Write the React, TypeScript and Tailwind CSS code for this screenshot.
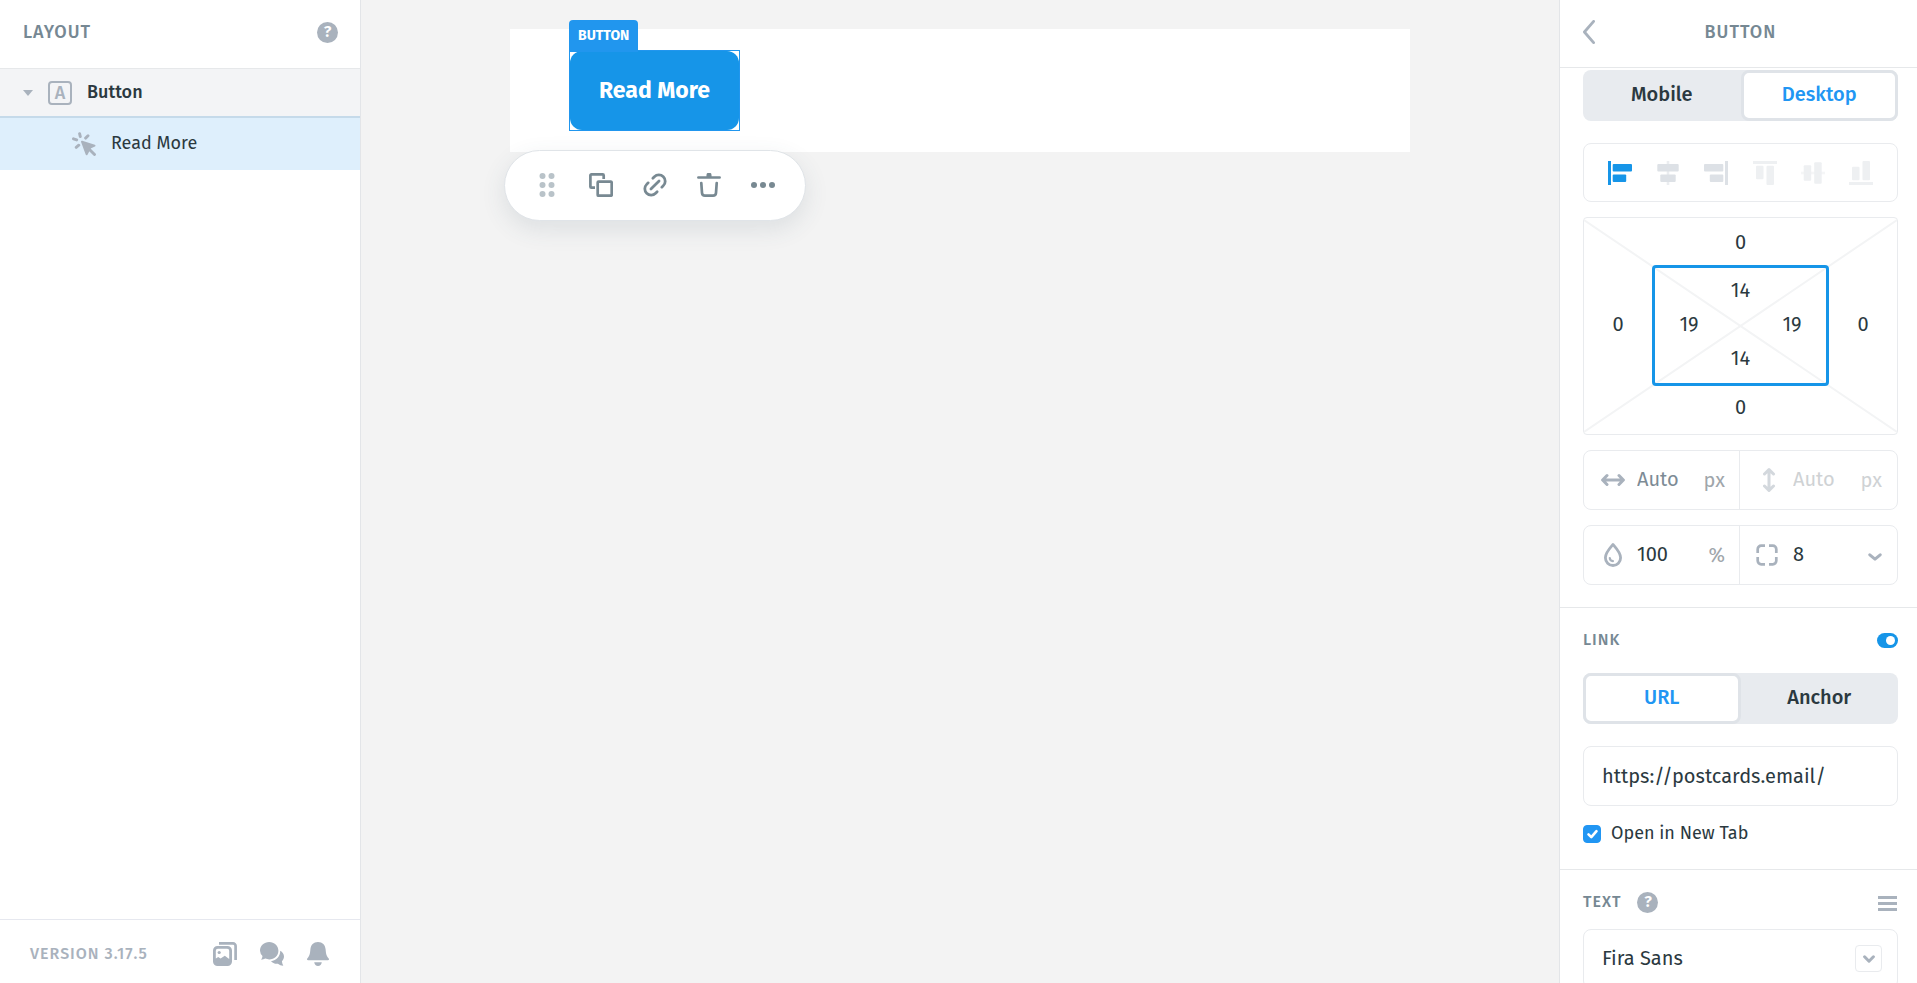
import { useState } from "react";
import type { ReactNode } from "react";

const fieldBox = "rounded-lg border border-[#e9ebee] bg-white";
const sectionTitle = "text-base font-medium tracking-[1px] text-[#768893]";
const panelTitle = "text-lg font-medium tracking-[1px] text-[#768893]";

function HelpButton() {
  return (
    <button
      type="button"
      aria-label="Help"
      className="flex size-[21px] items-center justify-center rounded-full bg-[#a9b2bd] text-base font-semibold text-white"
    >
      ?
    </button>
  );
}

function Segmented({ options, initial }: { options: string[]; initial: string }) {
  const [active, setActive] = useState(initial);

  return (
    <div className="grid h-[51px] grid-cols-2 rounded-lg bg-[#e8ebef]">
      {options.map((option) => (
        <button
          key={option}
          type="button"
          onClick={() => setActive(option)}
          className={
            option === active
              ? "rounded-lg border-3 border-[#dfe3e8] bg-white pb-1 text-xl font-medium text-[#2196f3]"
              : "pb-1 text-xl font-medium text-[#2b3940]"
          }
        >
          {option}
        </button>
      ))}
    </div>
  );
}

function Icon({
  children,
  className = "size-6",
  viewBox = "0 0 24 24",
  width = 2.7,
}: {
  children: ReactNode;
  className?: string;
  viewBox?: string;
  width?: number;
}) {
  return (
    <svg
      viewBox={viewBox}
      className={`${className} shrink-0`}
      fill="none"
      stroke="currentColor"
      strokeWidth={width}
      strokeLinecap="round"
      strokeLinejoin="round"
      aria-hidden="true"
    >
      {children}
    </svg>
  );
}

// Each icon is a guide line plus two blocks: [x, y, width, height]
const alignments = [
  { name: "Align left", color: "text-[#1695e8]", bars: [[0, 0, 3, 24], [4.7, 3, 19.3, 7.5], [4.7, 13.5, 13.5, 7.5]] },
  { name: "Align center", color: "text-[#dde1e6]", bars: [[10.7, 0, 2.6, 24], [1.3, 3, 21.4, 7.5], [4.3, 13.5, 15.4, 7.5]] },
  { name: "Align right", color: "text-[#dde1e6]", bars: [[21, 0, 3, 24], [0, 3, 19.3, 7.5], [5.8, 13.5, 13.5, 7.5]] },
  { name: "Align top", color: "text-[#eef0f2]", bars: [[0, 0, 24, 3], [3, 4.7, 7.5, 13.5], [13.5, 4.7, 7.5, 19.3]] },
  { name: "Align middle", color: "text-[#eef0f2]", bars: [[0, 10.7, 24, 2.6], [2.7, 4.3, 7.5, 15.4], [13.2, 1.3, 7.5, 21.4]] },
  { name: "Align bottom", color: "text-[#eef0f2]", bars: [[0, 21, 24, 3], [3, 5.8, 7.5, 13.5], [13.5, 0, 7.5, 19.3]] },
];

function NumberCell({ label, value, className = "self-center" }: { label: string; value: string; className?: string }) {
  return (
    <input
      aria-label={label}
      defaultValue={value}
      className={`w-9 justify-self-center bg-transparent pb-[3px] text-center text-xl leading-6 text-[#2b3940] outline-none ${className}`}
    />
  );
}

function LayoutPanel() {
  return (
    <aside className="flex w-[361px] shrink-0 flex-col border-r border-[#e3e5e8] bg-white">
      <header className="flex h-[69px] items-center justify-between border-b border-[#e6e8ea] pr-[22px] pb-1 pl-[23px]">
        <h2 className={panelTitle}>LAYOUT</h2>
        <HelpButton />
      </header>

      <button type="button" className="flex h-[49px] items-center border-b-2 border-[#c5daea] bg-[#f3f4f6] pl-[23px] text-left">
        <svg viewBox="0 0 10 6" className="mr-[15px] h-[6px] w-[10px] fill-[#a9b2bd]" aria-hidden="true">
          <path d="M0 0h10L5 6z" />
        </svg>
        <span aria-hidden="true" className="mr-[15px] flex size-6 items-center justify-center rounded-sm border-2 border-[#a9b2bd] text-lg leading-5 font-medium text-[#a9b2bd]">
          A
        </span>
        <span className="pb-0.5 text-lg font-medium text-[#2b3940]">Button</span>
      </button>

      <button type="button" className="flex h-[52px] items-center gap-[15px] bg-[#deeffc] pl-[72px] text-left">
        <Icon className="size-6 text-[#a9b2bd]" width={2.9}>
          <path d="M7.600 1.600l.7 3M16 3.800l-2.400 2.300M1.500 6.800l3.200 1.100M6.800 13.200l-2.600 2.200" />
          <path d="M10 9.700l12.500 3.900-4.400 2.100L14.600 22.200z" fill="currentColor" strokeWidth={2} />
          <path d="M17 17l5.500 5.500" />
        </Icon>
        <span className="pb-0.5 text-lg text-[#2b3940]">Read More</span>
      </button>

      <footer className="mt-auto flex h-16 items-center border-t border-[#e6e8ef] pt-1 pr-[31px] pl-[30px] text-[#a9b2bd]">
        <span className="text-base font-medium tracking-[1px]">VERSION 3.17.5</span>
        <div className="ml-auto flex items-center gap-[23px]">
          <button type="button" aria-label="Images">
            <Icon>
              <path d="M6 1.400h14a2.600 2.600 0 0 1 2.600 2.600v14" strokeLinecap="butt" />
              <path
                d="M4.500 4h10A4.500 4.500 0 0 1 19 8.500v11a4.500 4.500 0 0 1-4.500 4.500h-10A4.500 4.500 0 0 1 0 19.500v-11A4.500 4.500 0 0 1 4.500 4zM4.800 6.800a2 2 0 0 0-2 2v7.600l2.400-1.300 2.400 1.500 4.200-2.800 4.400 3.200V8.800a2 2 0 0 0-2-2z"
                fill="currentColor"
                fillRule="evenodd"
                stroke="none"
              />
              <circle cx="6.200" cy="10.500" r="1.600" fill="currentColor" stroke="none" />
            </Icon>
          </button>
          <button type="button" aria-label="Messages">
            <Icon>
              <g fill="currentColor" stroke="none">
                <path d="M9.200 0C14.300 0 18.400 3.800 18.400 8.700s-4.100 8.700-9.200 8.700c-1.400 0-2.700-.3-3.900-.8-1.100.7-2.500 1.100-4.200 1.100.8-1 1.300-2.300 1.400-3.600A8.500 8.500 0 0 1 0 8.700C0 3.800 4.100 0 9.200 0z" />
                <path d="M20.200 8.800c2.300 1.200 3.800 3.300 3.800 5.800 0 1.800-.8 3.500-2.100 4.700.1 1.600.6 3 1.400 4.500-2.100-.2-3.900-1-5.400-2.100-2.900.3-5.400-.7-6.900-2.500 5.400-.6 9.400-5 9.200-10.400z" />
              </g>
            </Icon>
          </button>
          <button type="button" aria-label="Notifications">
            <Icon className="h-6 w-[22px]" viewBox="0 0 22 24">
              <g fill="currentColor" stroke="none">
                <path d="M11 0c4.500 0 7.200 3 7.600 7.200.4 4.600.7 6.300 3.100 9.200.7.900.2 1.800-.9 1.800H1.200c-1.100 0-1.600-.9-.9-1.800 2.400-2.900 2.700-4.600 3.100-9.200C3.800 3 6.500 0 11 0z" />
                <path d="M7.200 20.200h7.600c-.3 2.300-1.700 3.800-3.800 3.800s-3.500-1.500-3.800-3.800z" />
              </g>
            </Icon>
          </button>
        </div>
      </footer>
    </aside>
  );
}

function Toolbar() {
  const item = "flex h-full w-[54px] items-center justify-center";

  return (
    <div className="absolute top-full -left-[6px] -mt-[2px] flex h-[71px] w-[302px] items-center justify-center rounded-full border border-[#e0e4e8] bg-white pb-px text-[#788992] shadow-[0_8px_24px_rgba(60,80,100,0.12)]">
      <button type="button" aria-label="Move" className={item}>
        <svg viewBox="0 0 16 24" className="h-6 w-4 fill-[#b9c3c9]" aria-hidden="true">
          {[3, 12, 21].map((y) => (
            <g key={y}>
              <circle cx="3.500" cy={y} r="3" />
              <circle cx="12.500" cy={y} r="3" />
            </g>
          ))}
        </svg>
      </button>
      <button type="button" aria-label="Duplicate" className={item}>
        <Icon>
          <rect x="8.700" y="8.700" width="14" height="14" rx="0.800" />
          <path d="M6 14.700H2.400a1 1 0 0 1-1-1V2.400a1 1 0 0 1 1-1h11.300a1 1 0 0 1 1 1V6" strokeLinecap="butt" />
        </Icon>
      </button>
      <button type="button" aria-label="Link" className={item}>
        <Icon viewBox="2.5 2.5 19 19" width={2.2}>
          <path d="M8.800 15.200l6.400-6.400" />
          <path d="M10.300 6.600l1.200-1.200a5 5 0 0 1 7.100 7.100l-1.200 1.200" />
          <path d="M13.700 17.400l-1.200 1.200a5 5 0 0 1-7.100-7.100l1.200-1.200" />
        </Icon>
      </button>
      <button type="button" aria-label="Delete" className={item}>
        <Icon>
          <path d="M1.400 4.500h21.200M10.800 2.200a1.200 1.200 0 0 1 2.400 0v1h-2.400zM4.300 10.200l.7 9.600a3 3 0 0 0 3 2.800h8a3 3 0 0 0 3-2.800l.7-9.600" />
        </Icon>
      </button>
      <button type="button" aria-label="More" className={item}>
        <svg viewBox="0 0 24 24" className="size-6 fill-current" aria-hidden="true">
          <circle cx="3" cy="12" r="3" />
          <circle cx="12" cy="12" r="3" />
          <circle cx="21" cy="12" r="3" />
        </svg>
      </button>
    </div>
  );
}

function Canvas() {
  return (
    <main className="min-w-0 flex-1 bg-[#f3f3f3] pt-[29px]">
      <div className="relative mx-auto max-w-[900px] bg-white py-[21px] pl-[59px]">
        <div className="relative w-fit border border-[#2196ee]">
          <span className="absolute -top-[31px] -left-px flex h-8 items-center rounded-t-sm bg-[#2196ee] px-[9px] text-sm font-bold text-white">
            BUTTON
          </span>
          <button type="button" className="flex h-[79px] items-center rounded-xl bg-[#1695e8] px-[29px] text-[23px] font-bold text-white">
            Read More
          </button>
        </div>
        <Toolbar />
      </div>
    </main>
  );
}

function SpacingBox() {
  return (
    <div className="relative grid h-[218px] grid-cols-[68px_1fr_68px] grid-rows-[47px_1fr_48px] rounded-sm border border-[#e9ebee]">
      <svg
        viewBox="0 0 313 216"
        preserveAspectRatio="none"
        className="absolute inset-0 size-full"
        stroke="#f3f4f5"
        strokeWidth="2"
        aria-hidden="true"
      >
        <path d="M0 2L313 214M313 2L0 214" />
      </svg>
      <NumberCell label="Margin top" value="0" className="relative col-span-3 mb-2 self-end" />
      <NumberCell label="Margin left" value="0" className="relative self-center" />
      <div className="relative grid grid-cols-[68px_1fr_68px] grid-rows-3 rounded-sm border-3 border-[#1695e8] py-[7px]">
        <NumberCell label="Padding top" value="14" className="col-span-3 self-center" />
        <NumberCell label="Padding left" value="19" />
        <NumberCell label="Padding right" value="19" className="col-start-3 self-center" />
        <NumberCell label="Padding bottom" value="14" className="col-span-3 self-center" />
      </div>
      <NumberCell label="Margin right" value="0" className="relative self-center" />
      <NumberCell label="Margin bottom" value="0" className="relative col-span-3 mt-[9px] self-start" />
    </div>
  );
}

function SettingsPanel() {
  const valueInput = "w-0 min-w-0 flex-1 bg-transparent pb-0.5 outline-none";

  return (
    <aside className="flex w-[358px] shrink-0 flex-col border-l border-[#e3e5e8] bg-white">
      <header className="grid h-[68px] shrink-0 grid-cols-[24px_1fr_24px] items-center border-b border-[#e6e8ea] pr-[19px] pb-1 pl-[23px]">
        <button type="button" aria-label="Back" className="text-[#a9b2bd]">
          <Icon className="h-6 w-3" viewBox="0 0 12 24" width={2.8}>
            <path d="M10.600 1.400L1.400 12l9.200 10.600" />
          </Icon>
        </button>
        <h2 className={`text-center ${panelTitle}`}>BUTTON</h2>
      </header>

      <div className="min-h-0 flex-1 overflow-hidden">
        <section className="flex flex-col gap-[15px] border-b border-[#e6e8ea] pt-[2px] pr-[19px] pb-[22px] pl-[23px]">
          <Segmented options={["Mobile", "Desktop"]} initial="Desktop" />

          <div className={`mt-[7px] flex h-[59px] items-center justify-between px-6 ${fieldBox}`}>
            {alignments.map(({ name, color, bars }) => (
              <button key={name} type="button" aria-label={name} className={color}>
                <svg viewBox="0 0 24 24" className="size-6 fill-current" aria-hidden="true">
                  {bars.map(([x, y, w, h]) => (
                    <rect
                      key={`${x}-${y}`}
                      x={x}
                      y={y}
                      width={w}
                      height={h}
                      rx={w === 24 || h === 24 ? 0 : 1}
                      opacity={w === 2.6 || h === 2.6 ? 0.6 : 1}
                    />
                  ))}
                </svg>
              </button>
            ))}
          </div>

          <SpacingBox />

          <div className={`grid h-[60px] grid-cols-[156px_1fr] text-xl text-[#a0a6ab] ${fieldBox}`}>
            <label className="flex items-center gap-3 border-r border-[#e9ebee] pr-[14px] pl-[17px]">
              <Icon className="size-6 text-[#a9b2bd]" width={3}>
                <path d="M2 12h20M6 7.500L1.600 12 6 16.500M18 7.500l4.400 4.500-4.400 4.500" />
              </Icon>
              <input aria-label="Width" defaultValue="Auto" className={`${valueInput} text-[#7d8b95]`} />
              <span>px</span>
            </label>
            <label className="flex items-center gap-3 pr-[15px] pl-[17px] opacity-50">
              <Icon className="size-6 text-[#a9b2bd]" width={3}>
                <path d="M12 2v20M7.500 6L12 1.600 16.500 6M7.500 18l4.500 4.400 4.500-4.400" />
              </Icon>
              <input aria-label="Height" defaultValue="Auto" className={valueInput} />
              <span>px</span>
            </label>
          </div>

          <div className={`grid h-[60px] grid-cols-[156px_1fr] text-xl text-[#a0a6ab] ${fieldBox}`}>
            <label className="flex items-center gap-3 border-r border-[#e9ebee] pr-[14px] pl-[17px]">
              <Icon className="size-6 text-[#a9b2bd]" width={2.8}>
                <path d="M12 1.500c3.200 3.700 7.600 8.300 7.600 13.200a7.600 7.800 0 0 1-15.200 0C4.400 9.800 8.800 5.200 12 1.500z" />
                <path d="M8.800 15a3.400 3.400 0 0 0 3.100 3.200" strokeWidth={2.200} />
              </Icon>
              <input aria-label="Opacity" defaultValue="100" className={`${valueInput} text-[#2b3940]`} />
              <span>%</span>
            </label>
            <div className="flex items-center gap-[14px] pr-[15px] pl-[15px]">
              <Icon className="size-6 text-[#a9b2bd]">
                <path
                  d="M2.700 10V6.200a3.500 3.500 0 0 1 3.500-3.500H10M14 2.700h3.800a3.500 3.500 0 0 1 3.500 3.500V10M21.300 14v3.800a3.500 3.500 0 0 1-3.500 3.500H14M10 21.300H6.200a3.500 3.500 0 0 1-3.500-3.500V14"
                  strokeLinecap="butt"
                />
              </Icon>
              <input aria-label="Border radius" defaultValue="8" className={`${valueInput} text-[#2b3940]`} />
              <button type="button" aria-label="Border radius corners" className="pt-1 text-[#a9b2bd]">
                <Icon className="h-2 w-[14px]" viewBox="0 0 14 8" width={3}>
                  <path d="M1.800 1.800L7 6.200l5.200-4.400" />
                </Icon>
              </button>
            </div>
          </div>
        </section>

        <section className="border-b border-[#e6e8ea] pt-5 pr-[19px] pb-6 pl-[23px]">
          <div className="mb-[21px] flex items-center justify-between">
            <h3 className={sectionTitle}>LINK</h3>
            <label className="relative flex">
              <input
                type="checkbox"
                role="switch"
                aria-label="Link"
                defaultChecked
                className="peer h-[15px] w-[21px] appearance-none rounded-full bg-[#c5ccd3] checked:bg-[#1695e8]"
              />
              <span className="pointer-events-none absolute top-[3px] left-[3px] size-[9px] rounded-full bg-white peer-checked:left-[9px]" />
            </label>
          </div>
          <Segmented options={["URL", "Anchor"]} initial="URL" />
          <input
            type="url"
            aria-label="Link URL"
            defaultValue="https://postcards.email/"
            className={`mt-[22px] block h-[60px] w-full px-[18px] text-xl text-[#2b3940] outline-none ${fieldBox}`}
          />
          <label className="mt-[15px] flex items-center gap-[10px] text-lg leading-6 text-[#2b3940]">
            <span className="relative mt-0.5 flex">
              <input type="checkbox" defaultChecked className="peer size-[18px] appearance-none rounded-sm border border-[#2196f3] checked:bg-[#2196f3]" />
              <svg
                viewBox="0 0 18 18"
                className="pointer-events-none absolute inset-0 hidden fill-none stroke-white peer-checked:block"
                strokeWidth="2.600"
                strokeLinecap="round"
                strokeLinejoin="round"
                aria-hidden="true"
              >
                <path d="M5.500 9.400l2.800 2.800 5.200-6" />
              </svg>
            </span>
            Open in New Tab
          </label>
        </section>

        <section className="pt-5 pr-[19px] pl-[23px]">
          <div className="mb-[15px] flex items-center">
            <h3 className={`mr-4 ${sectionTitle}`}>TEXT</h3>
            <HelpButton />
            <button type="button" aria-label="Text options" className="ml-auto pt-0.5 pr-px">
              <svg viewBox="0 0 19 15" className="h-[15px] w-[19px] fill-[#a9b2bd]" aria-hidden="true">
                <path d="M0 0h19v3H0zM0 6h19v3H0zM0 12h19v3H0z" />
              </svg>
            </button>
          </div>
          <div className="relative">
            <select aria-label="Font family" className={`h-[60px] w-full appearance-none px-[18px] pb-0.5 text-xl text-[#2b3940] outline-none ${fieldBox}`}>
              <option>Fira Sans</option>
            </select>
            <span className="pointer-events-none absolute top-4 right-4 flex size-[27px] items-center justify-center rounded-sm border border-[#e9ebee] text-[#a9b2bd]">
              <Icon className="h-2 w-3" viewBox="0 0 12 8" width={3}>
                <path d="M1.600 1.800L6 6.200l4.400-4.400" />
              </Icon>
            </span>
          </div>
        </section>
      </div>
    </aside>
  );
}

export default function App() {
  return (
    <div className="flex h-screen overflow-hidden bg-[#f3f3f3] font-['Fira_Sans',Roboto,sans-serif]">
      <LayoutPanel />
      <Canvas />
      <SettingsPanel />
    </div>
  );
}
